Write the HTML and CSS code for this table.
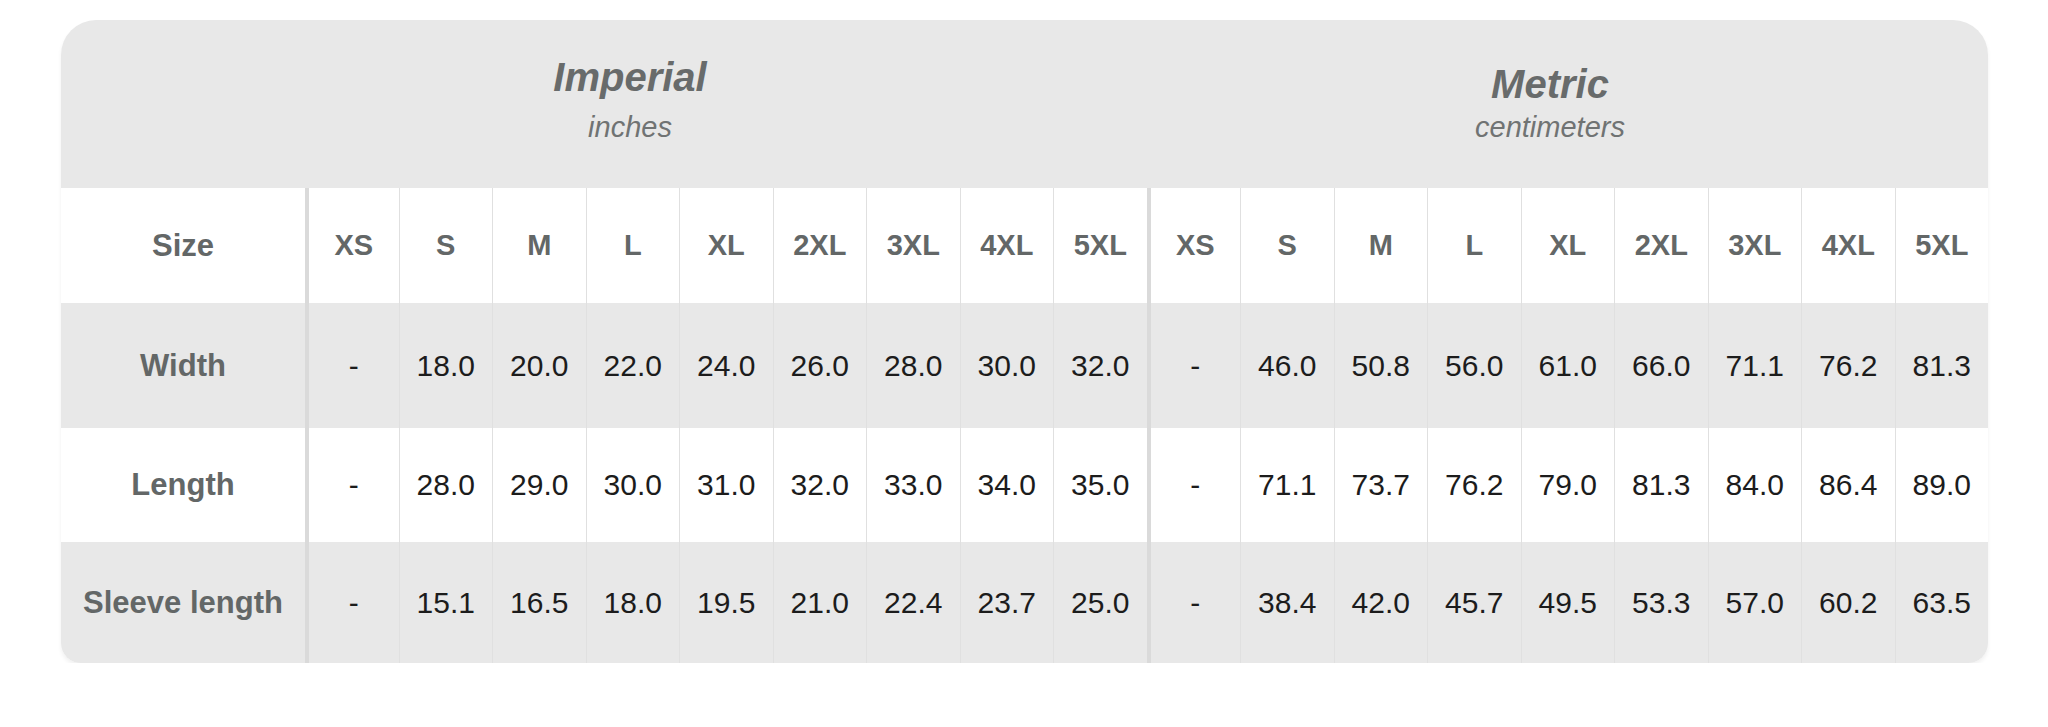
FILE: index.html
```html
<!DOCTYPE html>
<html lang="en">
<head>
<meta charset="utf-8">
<title>Size chart</title>
<link rel="stylesheet" href="styles.css">
</head>
<body>
<div class="chart">
  <div class="head">
    <div class="unit unit--imperial">
      <div class="unit__title">Imperial</div>
      <div class="unit__sub">inches</div>
    </div>
    <div class="unit unit--metric">
      <div class="unit__title">Metric</div>
      <div class="unit__sub">centimeters</div>
    </div>
  </div>

  <div class="row row--white row--sizes">
    <div class="cell cell--label">Size</div>
    <div class="cell cell--split cell--size">XS</div>
    <div class="cell cell--size">S</div>
    <div class="cell cell--size">M</div>
    <div class="cell cell--size">L</div>
    <div class="cell cell--size">XL</div>
    <div class="cell cell--size">2XL</div>
    <div class="cell cell--size">3XL</div>
    <div class="cell cell--size">4XL</div>
    <div class="cell cell--size">5XL</div>
    <div class="cell cell--split cell--size">XS</div>
    <div class="cell cell--size">S</div>
    <div class="cell cell--size">M</div>
    <div class="cell cell--size">L</div>
    <div class="cell cell--size">XL</div>
    <div class="cell cell--size">2XL</div>
    <div class="cell cell--size">3XL</div>
    <div class="cell cell--size">4XL</div>
    <div class="cell cell--size">5XL</div>
  </div>

  <div class="row row--gray row--width">
    <div class="cell cell--label">Width</div>
    <div class="cell cell--split">-</div>
    <div class="cell">18.0</div>
    <div class="cell">20.0</div>
    <div class="cell">22.0</div>
    <div class="cell">24.0</div>
    <div class="cell">26.0</div>
    <div class="cell">28.0</div>
    <div class="cell">30.0</div>
    <div class="cell">32.0</div>
    <div class="cell cell--split">-</div>
    <div class="cell">46.0</div>
    <div class="cell">50.8</div>
    <div class="cell">56.0</div>
    <div class="cell">61.0</div>
    <div class="cell">66.0</div>
    <div class="cell">71.1</div>
    <div class="cell">76.2</div>
    <div class="cell">81.3</div>
  </div>

  <div class="row row--white row--length">
    <div class="cell cell--label">Length</div>
    <div class="cell cell--split">-</div>
    <div class="cell">28.0</div>
    <div class="cell">29.0</div>
    <div class="cell">30.0</div>
    <div class="cell">31.0</div>
    <div class="cell">32.0</div>
    <div class="cell">33.0</div>
    <div class="cell">34.0</div>
    <div class="cell">35.0</div>
    <div class="cell cell--split">-</div>
    <div class="cell">71.1</div>
    <div class="cell">73.7</div>
    <div class="cell">76.2</div>
    <div class="cell">79.0</div>
    <div class="cell">81.3</div>
    <div class="cell">84.0</div>
    <div class="cell">86.4</div>
    <div class="cell">89.0</div>
  </div>

  <div class="row row--gray row--sleeve">
    <div class="cell cell--label">Sleeve length</div>
    <div class="cell cell--split">-</div>
    <div class="cell">15.1</div>
    <div class="cell">16.5</div>
    <div class="cell">18.0</div>
    <div class="cell">19.5</div>
    <div class="cell">21.0</div>
    <div class="cell">22.4</div>
    <div class="cell">23.7</div>
    <div class="cell">25.0</div>
    <div class="cell cell--split">-</div>
    <div class="cell">38.4</div>
    <div class="cell">42.0</div>
    <div class="cell">45.7</div>
    <div class="cell">49.5</div>
    <div class="cell">53.3</div>
    <div class="cell">57.0</div>
    <div class="cell">60.2</div>
    <div class="cell">63.5</div>
  </div>
</div>
</body>
</html>
```

FILE: styles.css
```css
* {
  box-sizing: border-box;
}

html, body {
  margin: 0;
  padding: 0;
  background: #ffffff;
}

body {
  font-family: "Liberation Sans", Arial, sans-serif;
  padding: 20px 0 0 61px;
}

.chart {
  width: 1927px;
  display: flex;
  flex-direction: column;
  border-radius: 35px 35px 20px 20px;
  overflow: hidden;
  box-shadow: 0 3px 4px rgba(0, 0, 0, 0.06);
}

.head {
  height: 168px;
  background: #e8e8e8;
  display: grid;
  grid-template-columns: 1138px 702px;
  color: #686b6b;
}

.unit {
  display: flex;
  flex-direction: column;
  align-items: center;
  padding-top: 37px;
}

.unit__title {
  font-size: 40px;
  line-height: 40px;
  font-weight: bold;
  font-style: italic;
}

.unit__sub {
  font-size: 29px;
  line-height: 29px;
  font-style: italic;
  color: #707373;
  margin-top: 16px;
}

.unit--metric {
  padding-top: 44px;
}

.unit--metric .unit__sub {
  margin-top: 9px;
}

.row {
  display: grid;
  grid-template-columns: 244px repeat(18, 1fr);
}

.row--white {
  background: #ffffff;
}

.row--gray {
  background: #e8e8e8;
}

.row--sizes {
  height: 115px;
}

.row--width {
  height: 125px;
}

.row--length {
  height: 114px;
}

.row--sleeve {
  height: 121px;
}

.cell {
  display: flex;
  align-items: center;
  justify-content: center;
  border-left: 1px solid #e0e0e0;
  font-size: 30px;
  color: #1c1c1c;
  white-space: nowrap;
}

.cell--label {
  border-left: none;
  font-size: 31px;
  font-weight: bold;
  color: #636767;
}

.cell--size {
  font-size: 29px;
  font-weight: bold;
  color: #636767;
}

.cell--split {
  border-left: 4px solid #dadada;
}
```
